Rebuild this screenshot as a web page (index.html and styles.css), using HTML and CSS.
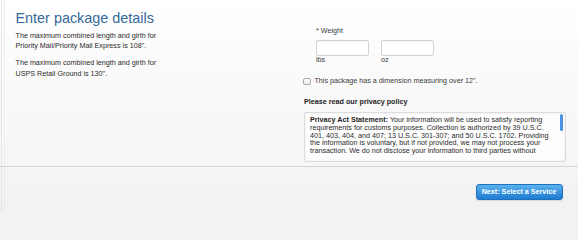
FILE: index.html
```html
<!DOCTYPE html>
<html lang="en">
<head>
<meta charset="utf-8">
<title>Enter package details</title>
<link rel="stylesheet" href="styles.css">
</head>
<body>
<div class="page">
  <div class="main">
    <div class="intro">
      <h1 class="title">Enter package details</h1>
      <p class="note">The maximum combined length and girth for<br>Priority Mail/Priority Mail Express is 108".</p>
      <p class="note">The maximum combined length and girth for<br>USPS Retail Ground is 130".</p>
    </div>
    <div class="form">
      <div class="weight">
        <div class="field-label">* Weight</div>
        <div class="inputs">
          <div class="unit">
            <input class="text-input" type="text" aria-label="lbs">
            <span class="unit-label">lbs</span>
          </div>
          <div class="unit">
            <input class="text-input" type="text" aria-label="oz">
            <span class="unit-label">oz</span>
          </div>
        </div>
      </div>
      <label class="check-row">
        <input class="check" type="checkbox">
        <span>This package has a dimension measuring over 12".</span>
      </label>
      <div class="policy-title">Please read our privacy policy</div>
      <div class="policy-box">
        <div class="policy-scroll">
          <b>Privacy Act Statement:</b> Your information will be used to satisfy reporting<br>requirements for customs purposes. Collection is authorized by 39 U.S.C.<br>401, 403, 404, and 407; 13 U.S.C. 301-307; and 50 U.S.C. 1702. Providing<br>the information is voluntary, but if not provided, we may not process your<br>transaction. We do not disclose your information to third parties without
        </div>
        <span class="thumb"></span>
      </div>
    </div>
  </div>
  <div class="footer">
    <button class="next-btn" type="button">Next: Select a Service</button>
  </div>
</div>
</body>
</html>
```
FILE: styles.css
```css
* { box-sizing: border-box; }

html, body {
  margin: 0;
  padding: 0;
  background: #f3f3f3;
}

body {
  width: 578px;
  height: 212px;
  overflow: hidden;
  font-family: "Liberation Sans", Arial, sans-serif;
  font-size: 7.2px;
  color: #2b2b2b;
}

.page {
  height: 212px;
  display: flex;
  flex-direction: column;
}

.main {
  height: 167px;
  display: grid;
  grid-template-columns: 288px 1fr;
  border-bottom: 1px solid #d4d4d4;
  background:
    linear-gradient(to right, transparent 1px, #e6e6e6 1px 2px, transparent 2px 4px, #eeeeee 4px 5px, transparent 5px),
    linear-gradient(to bottom, #ffffff 0%, #f9f9f9 55%, #f6f6f6 100%);
}

.intro {
  padding: 9.8px 0 0 15.5px;
}

.title {
  margin: 0;
  font-size: 14.4px;
  line-height: 17px;
  font-weight: normal;
  color: #35699a;
}

.note {
  margin: 4.2px 0 0;
  line-height: 10.3px;
  color: #2b2b2b;
}

.note + .note {
  margin-top: 6.7px;
}

.form {
  padding: 26px 12px 0 16px;
  display: flex;
  flex-direction: column;
}

.weight {
  padding-left: 12px;
}

.field-label {
  line-height: 10px;
  color: #3a3a3a;
}

.inputs {
  display: flex;
  gap: 12px;
  margin-top: 3.5px;
}

.unit {
  display: flex;
  flex-direction: column;
}

.text-input {
  width: 53px;
  height: 16.5px;
  margin: 0;
  padding: 0 3px;
  border: 1px solid #d2d2d2;
  border-radius: 2px;
  background: #fff;
  box-shadow: inset 0 1px 1px rgba(0, 0, 0, 0.05);
  font: inherit;
}

.unit-label {
  line-height: 8px;
  color: #3a3a3a;
}

.check-row {
  display: flex;
  align-items: center;
  gap: 3.5px;
  margin-top: 12.3px;
  line-height: 10px;
  color: #3a3a3a;
  margin-left: -0.7px;
}

.check {
  appearance: none;
  -webkit-appearance: none;
  width: 7.6px;
  height: 7.6px;
  margin: 0;
  border: 1px solid #a9a9a9;
  border-radius: 2px;
  background: linear-gradient(#ffffff, #ececec);
}

.policy-title {
  margin-top: 10.5px;
  line-height: 10px;
  font-weight: bold;
  color: #1e1e1e;
}

.policy-box {
  position: relative;
  margin-top: 5.2px;
  height: 50px;
  border: 1px solid #dcdcdc;
  border-radius: 1px;
  background: #fdfdfd;
  box-shadow: inset 0 0 3px rgba(0, 0, 0, 0.08);
  padding: 3.3px 8px 0 5px;
}

.policy-scroll {
  height: 40px;
  overflow: hidden;
  line-height: 7.7px;
  color: #2b2b2b;
  white-space: nowrap;
}

.policy-scroll b {
  color: #1e1e1e;
}

.thumb {
  position: absolute;
  top: 1px;
  right: 2.5px;
  width: 2.4px;
  height: 17.5px;
  border-radius: 1.5px;
  background: #4a92df;
}

.footer {
  flex: 1;
  display: flex;
  justify-content: flex-end;
  align-items: flex-start;
  padding: 16.5px 15.5px 0 0;
  background:
    linear-gradient(to right, transparent 1px, #e4e4e4 1px 2px, transparent 2px 4px, #ebebeb 4px 5px, transparent 5px),
    linear-gradient(to bottom, #f5f5f5, #f1f1f1);
}

.next-btn {
  height: 16.5px;
  width: 87px;
  margin: 0;
  padding: 0;
  border: 1px solid #1f70bd;
  border-radius: 3px;
  background: linear-gradient(to bottom, #5cb2ee 0%, #3a96e0 50%, #1f7bd0 100%);
  box-shadow: 0 1px 1px rgba(0, 0, 0, 0.12);
  color: #fff;
  font-family: "Liberation Sans", Arial, sans-serif;
  font-size: 7.2px;
  font-weight: bold;
  line-height: 14px;
  text-align: center;
}
```
